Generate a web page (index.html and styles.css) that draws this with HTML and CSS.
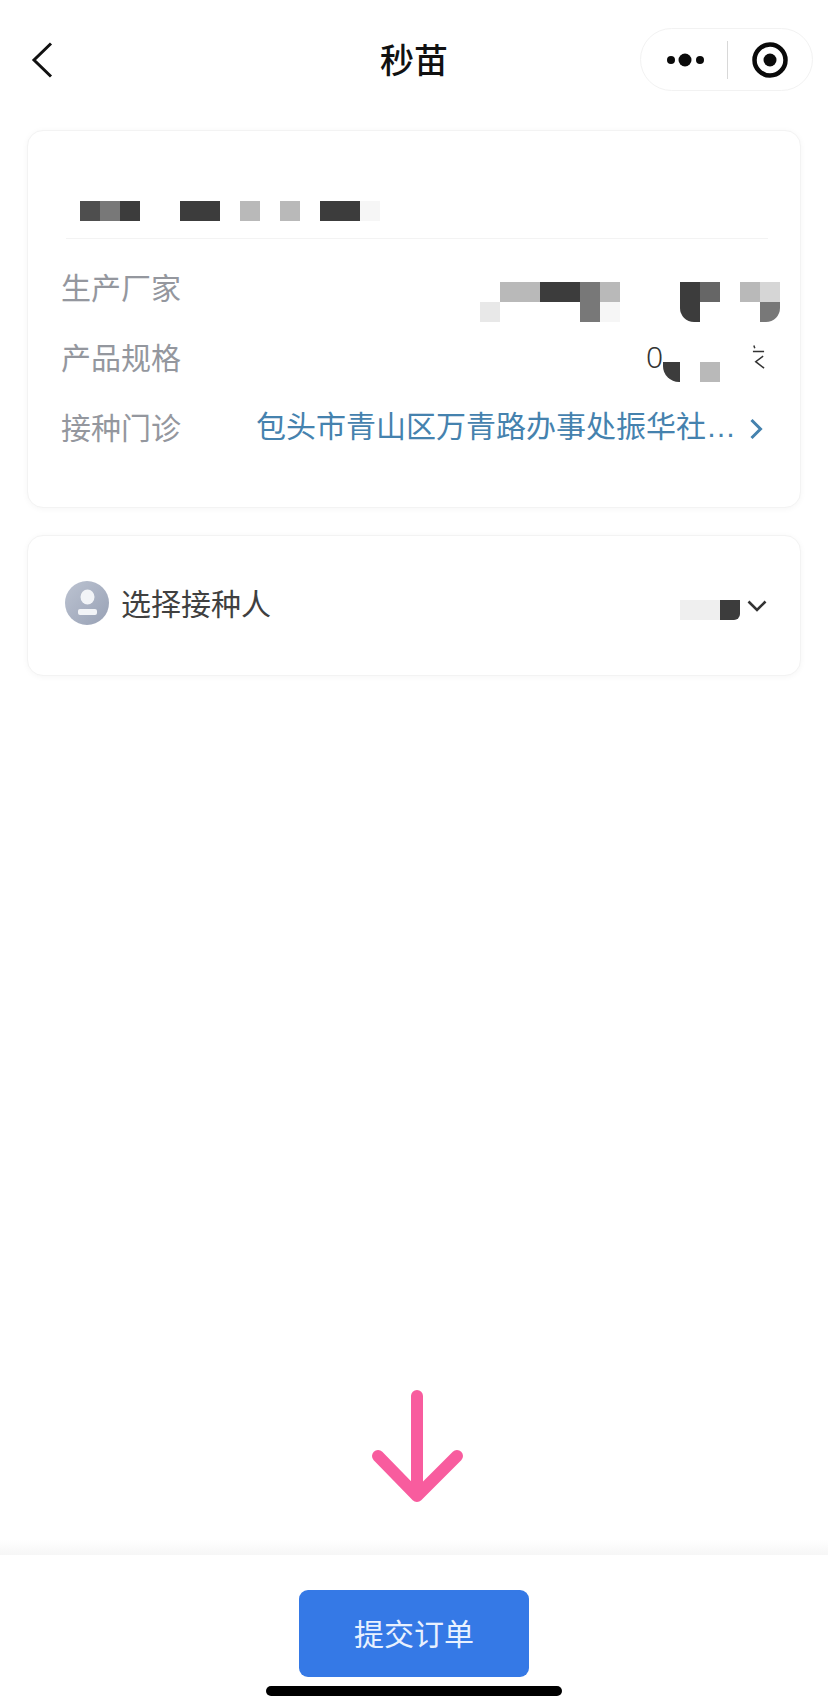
FILE: index.html
```html
<!DOCTYPE html>
<html lang="zh-CN">
<head>
<meta charset="utf-8">
<title>秒苗</title>
<link rel="stylesheet" href="styles.css">
</head>
<body>
<div class="page">
  <header class="nav">
    <div class="nav-left">
      <svg class="back" viewBox="0 0 22 36" aria-hidden="true"><path d="M20 1.5 3 18l17 16.5"/></svg>
    </div>
    <h1 class="nav-title">秒苗</h1>
    <div class="nav-right">
      <div class="capsule">
        <svg class="more" viewBox="0 0 44 16" aria-hidden="true"><circle cx="6" cy="8" r="4"/><circle cx="20" cy="8" r="6.5"/><circle cx="35" cy="8" r="4"/></svg>
        <span class="capsule-sep"></span>
        <svg class="target" viewBox="0 0 40 40" aria-hidden="true"><circle class="ring" cx="20" cy="20" r="15.5"/><circle cx="20" cy="20" r="6.5"/></svg>
      </div>
    </div>
  </header>

  <main class="content">
    <section class="card card-info">
      <div class="card-head">
        <div class="mosaic">
          <i class="c c-5"></i><i class="c c-7"></i><i class="c c-3"></i><i class="c"></i><i class="c"></i><i class="c c-3"></i><i class="c c-3"></i><i class="c"></i><i class="c c-b"></i><i class="c"></i><i class="c c-b"></i><i class="c"></i><i class="c c-3"></i><i class="c c-3"></i><i class="c c-f"></i>
        </div>
      </div>
      <div class="row">
        <span class="label">生产厂家</span>
        <div class="mask mask-maker">
          <div class="mosaic">
            <i class="c"></i><i class="c c-b"></i><i class="c c-b"></i><i class="c c-3"></i><i class="c c-3"></i><i class="c c-7"></i><i class="c c-b"></i><i class="c"></i><i class="c"></i><i class="c"></i><i class="c c-3"></i><i class="c c-6"></i><i class="c"></i><i class="c c-b"></i><i class="c c-d"></i>
          </div>
          <div class="mosaic">
            <i class="c c-e"></i><i class="c"></i><i class="c"></i><i class="c"></i><i class="c"></i><i class="c c-7"></i><i class="c c-f"></i><i class="c"></i><i class="c"></i><i class="c"></i><i class="c c-3 round-bl"></i><i class="c"></i><i class="c"></i><i class="c"></i><i class="c c-7 round-br"></i>
          </div>
        </div>
      </div>
      <div class="row">
        <span class="label">产品规格</span>
        <div class="mask mask-spec">
          <span class="spec-zero">0</span>
          <i class="c c-3 round-bl-lg spec-a"></i>
          <i class="c c-b spec-b"></i>
          <svg class="spec-frag" viewBox="0 0 14 28" aria-hidden="true"><path d="M2 1.5 3 4.5M1 8h12M12 13l-8 6 9 7"/></svg>
        </div>
      </div>
      <div class="row">
        <span class="label">接种门诊</span>
        <a class="clinic">
          <span class="clinic-name">包头市青山区万青路办事处振华社<span class="ell">…</span></span>
          <svg class="chev-right" viewBox="0 0 14 22" aria-hidden="true"><path d="M2.5 2 11.5 11l-9 9"/></svg>
        </a>
      </div>
    </section>

    <section class="card card-person">
      <svg class="avatar" viewBox="0 0 44 44" aria-hidden="true">
        <defs><linearGradient id="av" x1="0" y1="0" x2="1" y2="1"><stop offset="0" stop-color="#bcc3d1"/><stop offset="1" stop-color="#98a1b5"/></linearGradient></defs>
        <circle cx="22" cy="22" r="22" fill="url(#av)"/>
        <ellipse cx="22.5" cy="16" rx="7" ry="7.5" fill="#f2f4f7"/>
        <rect x="13" y="28" width="19" height="6" rx="2" fill="#f2f4f7"/>
      </svg>
      <span class="person-label">选择接种人</span>
      <div class="person-value">
        <div class="mosaic">
          <i class="c c-f1"></i><i class="c c-f1"></i><i class="c c-3 round-br-sm"></i>
        </div>
        <svg class="chev-down" viewBox="0 0 20 12" aria-hidden="true"><path d="M1.5 1.5 10 10l8.5-8.5"/></svg>
      </div>
    </section>

    <div class="spacer"></div>
    <svg class="arrow" viewBox="0 0 100 114" aria-hidden="true"><path d="M53 6V106M14 66 53 106 93 66"/></svg>
    <div class="footer-fade"></div>
  </main>

  <footer class="footer">
    <button class="submit" type="button">提交订单</button>
    <div class="home-bar"></div>
  </footer>
</div>
</body>
</html>
```

FILE: styles.css
```css
* { box-sizing: border-box; }
html, body { margin: 0; padding: 0; background: #fff; }
body { font-family: "Noto Sans CJK SC", "Noto Sans", sans-serif; color: #333; }

.page { width: 828px; height: 1704px; display: flex; flex-direction: column; overflow: hidden; }

.nav { height: 130px; padding-top: 28px; display: grid; grid-template-columns: 1fr auto 1fr; align-items: start; flex: none; }
.nav-left { height: 63px; padding-left: 31px; display: flex; align-items: center; }
.back { width: 22px; height: 36px; fill: none; stroke: #111; stroke-width: 3; }
.nav-title { margin: 0; height: 62px; line-height: 61px; font-size: 34px; font-weight: 500; color: #111; }
.nav-right { display: flex; justify-content: flex-end; padding-right: 15px; }

.capsule { width: 173px; height: 63px; border: 1px solid #f2f2f2; border-radius: 32px; background: #fff; display: flex; align-items: center; padding-left: 24px; }
.more { width: 44px; height: 16px; fill: #0a0a0a; }
.capsule-sep { width: 1px; height: 38px; background: #d8d8d8; margin-left: 18px; }
.target { width: 40px; height: 40px; margin-left: 22px; fill: #0a0a0a; }
.target .ring { fill: none; stroke: #0a0a0a; stroke-width: 4.5; }

.content { flex: 1; display: flex; flex-direction: column; padding: 0; }

.card { margin: 0 27px; background: #fff; border: 1px solid #f3f3f3; border-radius: 16px; box-shadow: 0 1px 6px rgba(0, 0, 0, .04); }
.card-info { height: 378px; padding: 0 0 0 33px; }
.card-head { margin: 70px 32px 16px 5px; padding: 0 0 17px 14px; border-bottom: 1px solid #f3f3f3; }

.mosaic { display: flex; height: 20px; }
.c { display: block; width: 20px; height: 20px; flex: none; }
.c-3 { background: #3c3c3c; }
.c-5 { background: #4e4e4e; }
.c-6 { background: #666; }
.c-7 { background: #787878; }
.c-b { background: #b9b9b9; }
.c-d { background: #d6d6d6; }
.c-e { background: #e8e8e8; }
.c-f { background: #f6f6f6; }
.c-f1 { background: #efefef; }
.round-bl { border-bottom-left-radius: 14px; }
.round-br { border-bottom-right-radius: 14px; }
.round-bl-lg { border-bottom-left-radius: 16px; }
.round-br-sm { border-bottom-right-radius: 6px; }

.row { height: 70px; display: flex; align-items: center; justify-content: space-between; }
.label { font-size: 30px; line-height: 40px; color: #94979e; margin-bottom: 9px; }

.mask-maker { align-self: flex-start; margin-top: 27px; margin-right: 20px; width: 300px; }

.mask-spec { align-self: flex-start; margin-top: 20px; margin-right: 35px; width: 119px; height: 37px; display: flex; align-items: flex-end; }
.spec-zero { font-family: "Noto Sans", sans-serif; font-weight: 300; font-size: 30px; line-height: 37px; width: 17px; color: #333; align-self: flex-start; margin-top: -7px; }
.spec-a { width: 17px; }
.spec-b { margin-left: 20px; }
.spec-frag { width: 14px; height: 30px; margin-left: 32px; margin-top: -3px; align-self: flex-start; fill: none; stroke: #333; stroke-width: 1.6; }

.clinic { display: flex; align-items: center; margin-right: 37px; margin-bottom: 9px; color: #4582ae; }
.clinic-name { font-size: 30px; line-height: 40px; white-space: nowrap; }
.ell { font-family: "Liberation Sans", sans-serif; letter-spacing: 0; }
.chev-right { width: 14px; height: 22px; margin-left: 13px; margin-top: 7px; fill: none; stroke: #4582ae; stroke-width: 3; }

.card-person { height: 141px; margin-top: 27px; padding: 45px 33px 0 37px; display: flex; align-items: flex-start; }
.avatar { width: 44px; height: 44px; flex: none; }
.person-label { margin-left: 12px; font-size: 30px; line-height: 42px; color: #404040; }
.person-value { margin-left: auto; margin-top: 19px; display: flex; align-items: flex-start; }
.chev-down { width: 20px; height: 12px; margin-left: 7px; fill: none; stroke: #333; stroke-width: 2.6; }

.spacer { flex: 1; }
.arrow { width: 100px; height: 114px; align-self: center; margin-bottom: 36px; fill: none; stroke: #f85c9e; stroke-width: 12; stroke-linecap: round; stroke-linejoin: round; }
.footer-fade { height: 15px; background: linear-gradient(#fff, #f6f6f6); flex: none; }

.footer { height: 149px; flex: none; padding-top: 35px; display: flex; flex-direction: column; align-items: center; background: #fff; }
.submit { width: 230px; height: 87px; border: 0; border-radius: 9px; background: #3579e6; color: #e8f1ff; font-family: inherit; font-size: 30px; padding: 0 0 4px; }
.home-bar { width: 296px; height: 10px; margin-top: 9px; border-radius: 5px; background: #000; }
```
